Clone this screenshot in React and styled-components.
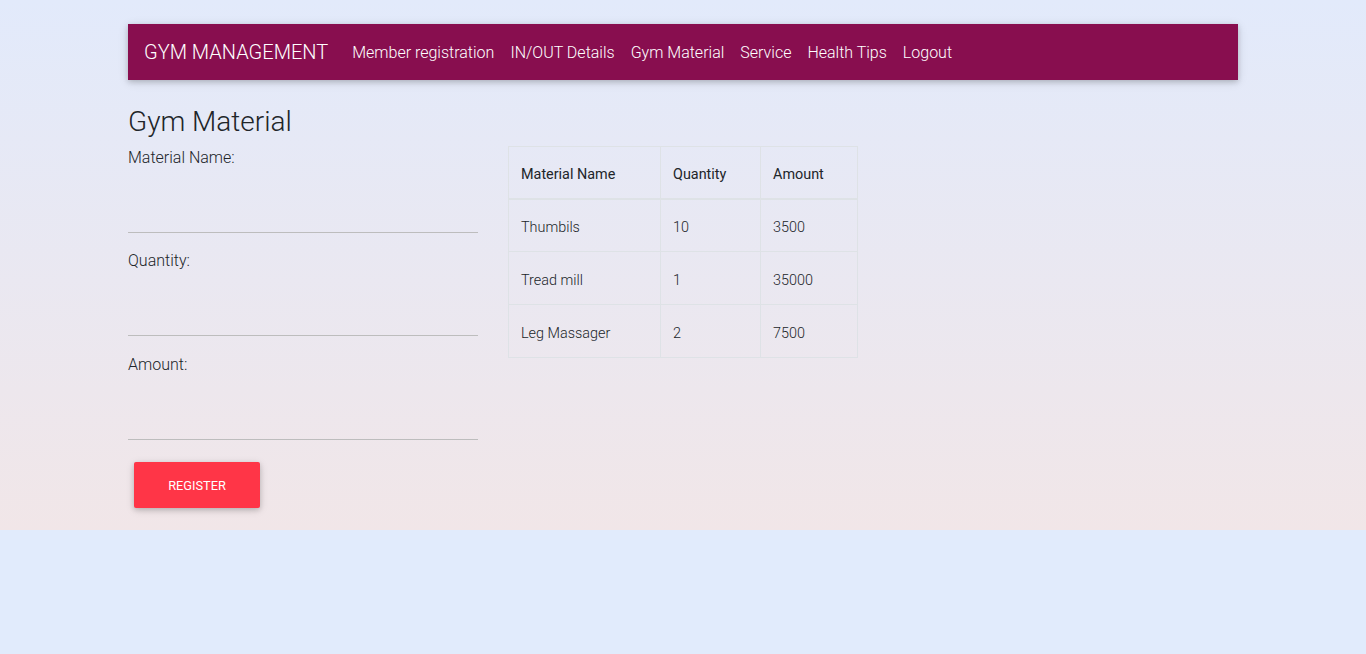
import React from 'react';
import styled, { createGlobalStyle } from 'styled-components';

const materials = [
  { name: 'Thumbils', quantity: 10, amount: 3500 },
  { name: 'Tread mill', quantity: 1, amount: 35000 },
  { name: 'Leg Massager', quantity: 2, amount: 7500 },
];

const navLinks = ['Member registration', 'IN/OUT Details', 'Gym Material', 'Service', 'Health Tips', 'Logout'];

const fields = ['Material Name:', 'Quantity:', 'Amount:'];

function App() {
  return (
    <>
      <GlobalStyle />
      <Container>
        <Navbar>
          <Brand>GYM MANAGEMENT</Brand>
          <NavList>
            {navLinks.map(link => (
              <NavLink key={link} href="#">{link}</NavLink>
            ))}
          </NavList>
        </Navbar>

        <Title>Gym Material</Title>

        <Row>
          <Column>
            <form onSubmit={e => e.preventDefault()}>
              {fields.map(label => (
                <Field key={label}>
                  <Label>{label}</Label>
                  <Input type="text" />
                </Field>
              ))}
              <RegisterButton type="submit">Register</RegisterButton>
            </form>
          </Column>

          <Column>
            <Table>
              <thead>
                <tr>
                  <Th>Material Name</Th>
                  <Th>Quantity</Th>
                  <Th>Amount</Th>
                </tr>
              </thead>
              <tbody>
                {materials.map(item => (
                  <tr key={item.name}>
                    <Td>{item.name}</Td>
                    <Td>{item.quantity}</Td>
                    <Td>{item.amount}</Td>
                  </tr>
                ))}
              </tbody>
            </Table>
          </Column>
        </Row>
      </Container>
    </>
  );
}

const GlobalStyle = createGlobalStyle`
  html {
    background: #e1ebfc;
  }
  body {
    margin: 0;
    font-family: Roboto, "Liberation Sans", sans-serif;
    font-weight: 300;
    color: #212529;
    background: linear-gradient(to bottom, #e2eafb 0%, #f1e6e8 100%);
  }
  * {
    box-sizing: border-box;
  }
`;

const Container = styled.div`
  width: 1110px;
  margin: 0 auto;
  padding: 24px 0 22px;
`;

const Navbar = styled.nav`
  display: flex;
  align-items: center;
  height: 56px;
  padding: 8px 16px;
  background-color: #880e4f;
  box-shadow: 0 2px 5px 0 rgba(0, 0, 0, 0.16), 0 2px 10px 0 rgba(0, 0, 0, 0.12);
`;

const Brand = styled.span`
  font-size: 20px;
  font-weight: 300;
  color: #fff;
  margin-right: 16px;
  white-space: nowrap;
`;

const NavList = styled.div`
  display: flex;
  align-items: center;
`;

const NavLink = styled.a`
  padding: 9px 8px 7px;
  font-size: 16px;
  line-height: 24px;
  font-weight: 300;
  color: #fff;
  text-decoration: none;
  white-space: nowrap;
`;

const Title = styled.h3`
  margin: 25px 0 7px;
  font-size: 28px;
  line-height: 1.2;
  font-weight: 300;
`;

const Row = styled.div`
  display: grid;
  grid-template-columns: 350px 350px;
  column-gap: 30px;
  align-items: start;
`;

const Column = styled.div`
  min-width: 0;
`;

const Field = styled.div`
  display: flex;
  flex-direction: column;
  margin-bottom: 16.5px;
`;

const Label = styled.label`
  font-size: 16px;
  line-height: 24px;
  font-weight: 300;
`;

const Input = styled.input`
  height: 63px;
  width: 100%;
  padding: 0;
  border: none;
  border-bottom: 1px solid #bdbdbd;
  background: transparent;
  outline: none;
  font-family: inherit;
  font-size: 16px;
`;

const RegisterButton = styled.button`
  display: block;
  margin: 22px 6px 0;
  height: 46px;
  width: 126px;
  padding: 2px 0 0;
  border: none;
  border-radius: 2px;
  background-color: #ff3547;
  color: #fff;
  font-family: inherit;
  font-size: 12.8px;
  font-weight: 400;
  text-transform: uppercase;
  box-shadow: 0 2px 5px 0 rgba(0, 0, 0, 0.16), 0 2px 10px 0 rgba(0, 0, 0, 0.12);
  cursor: pointer;
`;

const Table = styled.table`
  width: 350px;
  border-collapse: collapse;

  thead th {
    border-bottom-width: 2px;
  }
`;

const Th = styled.th`
  padding: 17px 12px 13px;
  border: 1px solid #dee2e6;
  font-size: 14.4px;
  line-height: 21px;
  font-weight: 400;
  text-align: left;
  color: #212529;

  &:nth-child(1) { width: 152px; }
  &:nth-child(2) { width: 100px; }
`;

const Td = styled.td`
  padding: 18.5px 12px 12.5px;
  border: 1px solid #dee2e6;
  font-size: 14.4px;
  line-height: 20.7px;
  font-weight: 300;
  color: #212529;
`;

export default App;
